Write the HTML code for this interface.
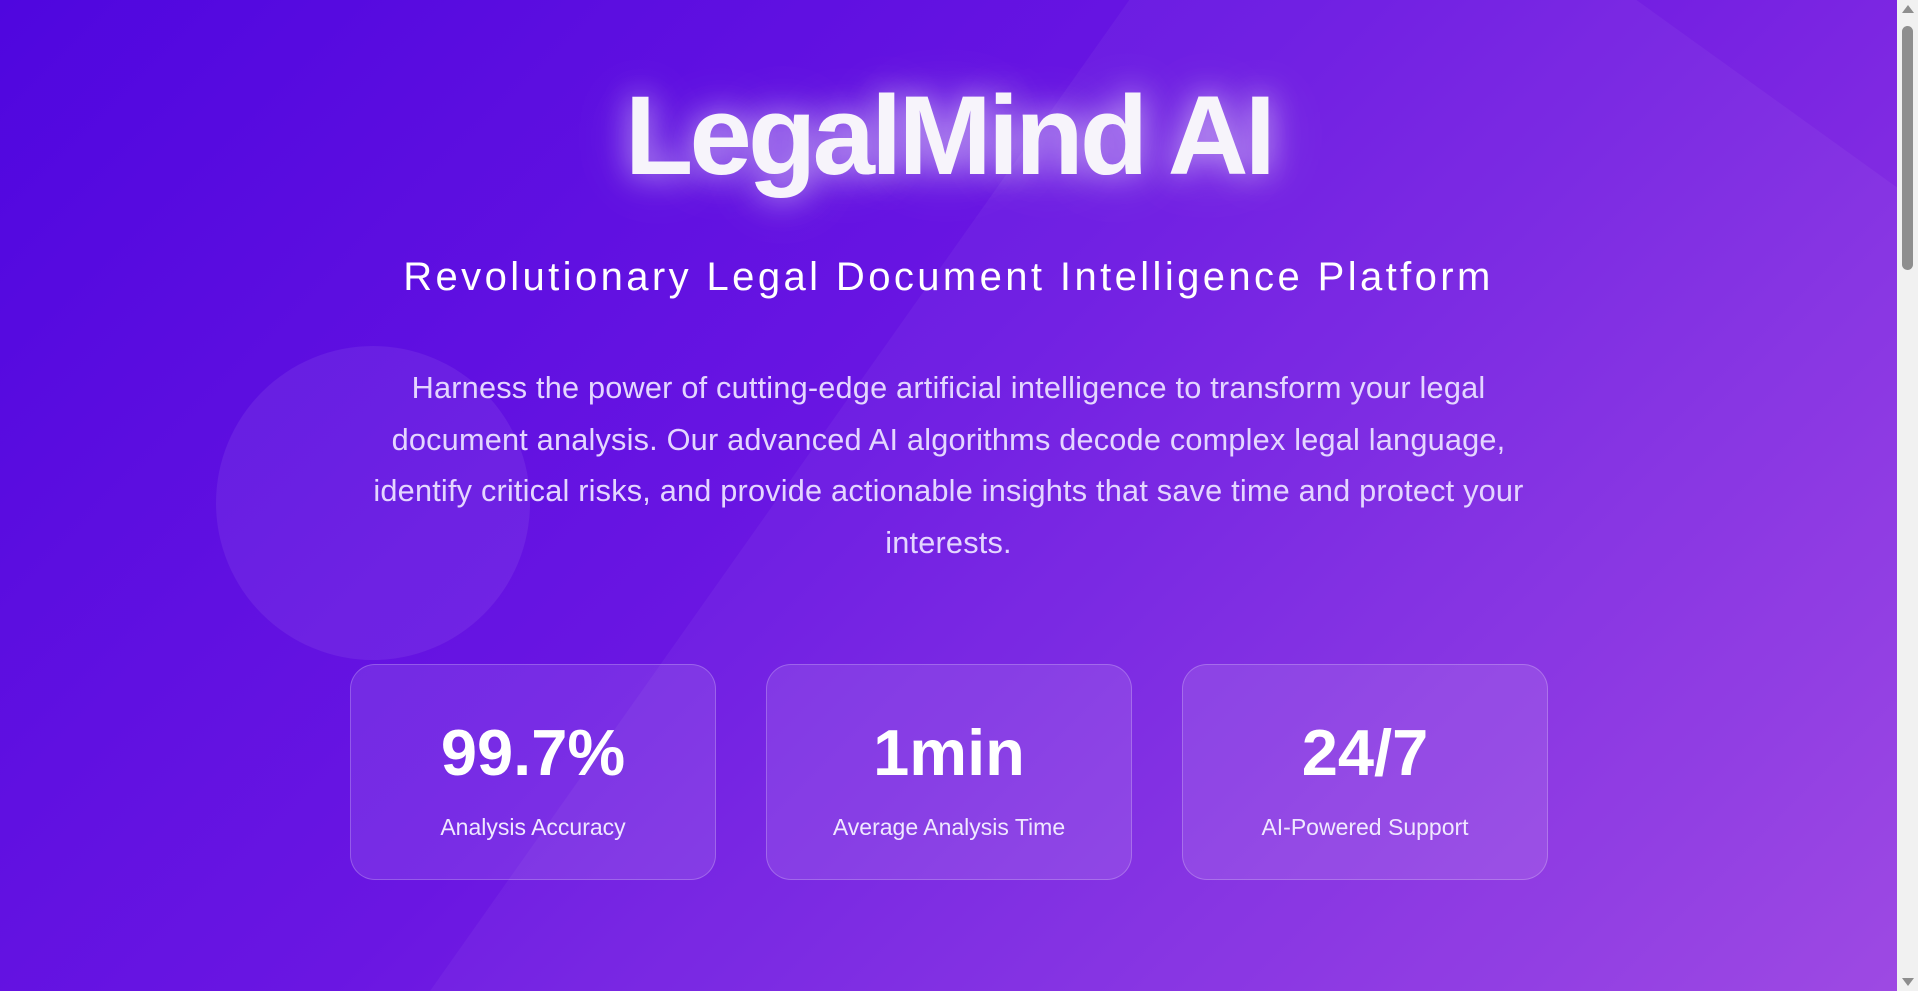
<!DOCTYPE html>
<html><head><meta charset="utf-8"><style>
*{margin:0;padding:0;box-sizing:border-box}
html,body{width:1918px;height:991px;overflow:hidden}
body{position:relative;font-family:"Liberation Sans",sans-serif;color:#fff;
background:linear-gradient(135deg,#4f06df 0%,#6a16e2 45%,#9a42e2 100%);}
.abs{position:absolute}
.title{left:0;width:1897px;text-align:center;top:71px;font-size:112px;font-weight:700;letter-spacing:-3.8px;line-height:130px;color:#f7f4fb;
text-shadow:0 0 30px rgba(255,255,255,0.55),0 0 60px rgba(255,255,255,0.3)}
.sub{left:0;width:1897px;text-align:center;top:252px;font-size:40px;line-height:50px;letter-spacing:3.4px;color:#fff}
.p{left:0;width:1897px;text-align:center;top:362px;font-size:30.7px;line-height:51.5px;color:#e4d6ff;letter-spacing:0.2px}
.card{top:664px;width:366px;height:216px;border-radius:25px;background:rgba(255,255,255,0.1);border:1px solid rgba(255,255,255,0.22);text-align:center}
.num{position:absolute;left:0;right:0;top:48px;font-size:65px;font-weight:700;line-height:80px}
.lab{position:absolute;left:0;right:0;top:147px;font-size:23px;line-height:30px;color:#f0e8ff}
.sb{left:1897px;top:0;width:21px;height:991px;background:#f1f1f1}
.th{left:1902px;top:26px;width:11px;height:244px;border-radius:6px;background:#8e8e8e}
</style></head><body>
<svg class="abs" style="left:0;top:0;overflow:hidden" width="1918" height="991">
<polygon points="430,991 1300,-242 2600,693 1700,2000" fill="rgba(255,255,255,0.045)"/>
<circle cx="373" cy="503" r="157" fill="rgba(255,255,255,0.07)"/>
</svg>
<div class="abs title">LegalMind AI</div>
<div class="abs sub">Revolutionary Legal Document Intelligence Platform</div>
<div class="abs p">Harness the power of cutting-edge artificial intelligence to transform your legal<br>document analysis. Our advanced AI algorithms decode complex legal language,<br>identify critical risks, and provide actionable insights that save time and protect your<br>interests.</div>
<div class="abs card" style="left:350px"><div class="num">99.7%</div><div class="lab">Analysis Accuracy</div></div>
<div class="abs card" style="left:766px"><div class="num">1min</div><div class="lab">Average Analysis Time</div></div>
<div class="abs card" style="left:1182px"><div class="num">24/7</div><div class="lab">AI-Powered Support</div></div>
<div class="abs sb"></div>
<div class="abs th"></div>
<svg class="abs" style="left:1901px;top:4px" width="14" height="10"><polygon points="7,1 13,9 1,9" fill="#8e8e8e"/></svg>
<svg class="abs" style="left:1901px;top:977px" width="14" height="10"><polygon points="1,1 13,1 7,9" fill="#8e8e8e"/></svg>
</body></html>
